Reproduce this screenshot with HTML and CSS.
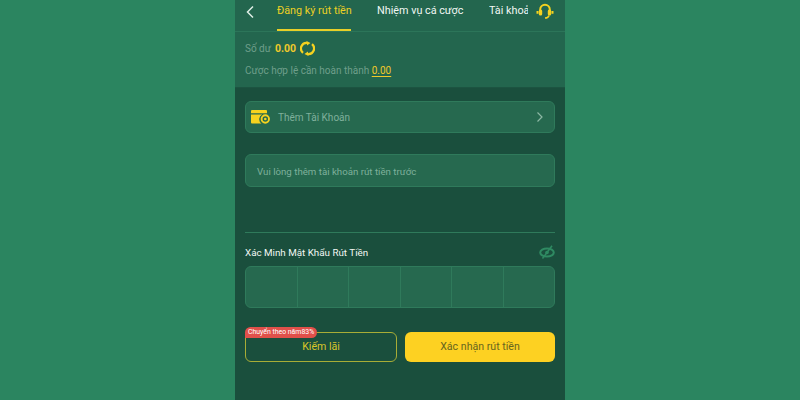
FILE: index.html
```html
<!DOCTYPE html>
<html lang="vi">
<head>
<meta charset="UTF-8">
<meta name="viewport" content="width=device-width, initial-scale=1.0">
<title>Đăng ký rút tiền</title>
<link rel="stylesheet" href="styles.css">
</head>
<body>
<div class="phone">
  <div class="top">
    <nav class="tabs">
      <svg class="back" width="10" height="14" viewBox="0 0 10 14"><path d="M8 1.500 2.500 7 8 12.500" fill="none" stroke="#dfeee6" stroke-width="1.500"/></svg>
      <div class="tab active">Đăng ký rút tiền</div>
      <div class="tab task">Nhiệm vụ cá cược</div>
      <div class="tab cut">Tài khoản</div>
      <svg class="support" width="18" height="17" viewBox="0 0 18 17">
        <path d="M4.200 9V6.500a4.800 4.800 0 0 1 9.600 0V9" fill="none" stroke="#f5d21f" stroke-width="2"/>
        <rect x="2.800" y="6.500" width="3.400" height="6" rx="1.500" fill="#f5d21f"/>
        <rect x="11.800" y="6.500" width="3.400" height="6" rx="1.500" fill="#f5d21f"/>
        <path d="M0.500 8h2v2.800h-2zM15.500 8h2v2.800h-2z" fill="#f5d21f"/>
        <path d="M13 12.500c-.5 1.800-2 2.500-4 2.500" fill="none" stroke="#f5d21f" stroke-width="1.600"/>
      </svg>
    </nav>
    <div class="balance">
      <div class="balance-row">
        <span>Số dư</span> <b>0.00</b>
        <svg width="15" height="15" viewBox="0 0 15 15">
          <path d="M3 11.800A5.600 5.600 0 0 1 7 1.900" fill="none" stroke="#f5d21f" stroke-width="2.300"/>
          <path d="M12 3.200A5.600 5.600 0 0 1 8 13.100" fill="none" stroke="#f5d21f" stroke-width="2.300"/>
          <path d="M6.500 0 10.500 2 7 4.500zM8.500 15 4.500 13 8 10.500z" fill="#f5d21f"/>
        </svg>
      </div>
      <div class="wager-row">Cược hợp lệ cần hoàn thành <u>0.00</u></div>
    </div>
  </div>

  <main class="content">
    <div class="box add-account">
      <svg width="19" height="14" viewBox="0 0 19 14">
        <path d="M1 0h14a1 1 0 0 1 1 1v2.200H0V1a1 1 0 0 1 1-1z" fill="#f5d21f"/>
        <path d="M0 4.500h11.200a5.200 5.200 0 0 0-.8 9H1a1 1 0 0 1-1-1z" fill="#f5d21f"/>
        <circle cx="14.300" cy="9" r="3.700" fill="none" stroke="#f5d21f" stroke-width="1.900"/>
        <circle cx="14.300" cy="9" r="1.300" fill="#f5d21f"/>
      </svg>
      <span class="add-text">Thêm Tài Khoản</span>
      <svg class="chev" width="8" height="12" viewBox="0 0 8 12"><path d="M1.500 1.500 6 6l-4.500 4.500" fill="none" stroke="#8db8a5" stroke-width="1.200"/></svg>
    </div>

    <div class="box notice">Vui lòng thêm tài khoản rút tiền trước</div>

    <hr class="line">

    <div class="pass-head">
      <span>Xác Minh Mật Khẩu Rút Tiền</span>
      <svg width="16" height="14" viewBox="0 0 16 14">
        <ellipse cx="8" cy="7.500" rx="6.800" ry="4" fill="none" stroke="#2f8a62" stroke-width="2"/>
        <circle cx="8" cy="7.500" r="1.800" fill="#2f8a62"/>
        <path d="M13 .8 3.500 13.500" stroke="#2f8a62" stroke-width="1.500"/>
      </svg>
    </div>
    <div class="pin">
      <div></div><div></div><div></div><div></div><div></div><div></div>
    </div>

    <div class="buttons">
      <div class="btn outline">
        <span class="badge">Chuyển theo năm83%</span>
        Kiếm lãi
      </div>
      <div class="btn solid">Xác nhận rút tiền</div>
    </div>
  </main>
</div>
</body>
</html>
```

FILE: styles.css
```css
body {
  margin: 0;
  height: 400px;
  overflow: hidden;
  background-color: #2b8560;
  font-family: Roboto, "Liberation Sans", sans-serif;
}

.phone {
  width: 330px;
  height: 400px;
  margin: 0 auto;
  background-color: #1a4f3d;
}

.top {
  height: 88px;
  background-color: #23664e;
  border-bottom: 1px solid #1c5441;
  box-sizing: border-box;
}

.tabs {
  display: flex;
  height: 32px;
  box-sizing: border-box;
  align-items: flex-start;
  padding-left: 10px;
  border-bottom: 1px solid #2c7559;
}

.back {
  margin-top: 5px;
}

.tab {
  color: #f1f7f3;
  font-size: 10.800px;
  line-height: 22px;
  height: 31px;
  box-sizing: border-box;
  white-space: nowrap;
}

.tab.active {
  margin-left: 22px;
  width: 74px;
  color: #ecd024;
  border-bottom: 2px solid #e8cf28;
}

.task {
  margin-left: 26px;
  width: 86px;
}

.cut {
  margin-left: 26px;
  width: 39px;
  overflow: hidden;
}

.support {
  margin-left: 8px;
  margin-top: 3px;
}

.balance {
  padding: 9px 10px 0;
  font-size: 10px;
  color: #6f9f8b;
}

.balance-row {
  display: flex;
  align-items: center;
  gap: 4px;
  height: 15px;
}

.balance-row b {
  color: #f0c92a;
  font-size: 10.500px;
}

.wager-row {
  margin-top: 8px;
  line-height: 14px;
}

.wager-row u {
  color: #f0c92a;
  text-underline-offset: 2px;
}

.content {
  padding: 13px 10px 0;
}

.box {
  display: flex;
  align-items: center;
  background-color: #26694f;
  border: 1px solid #2f7a5b;
  border-radius: 6px;
  box-sizing: border-box;
  font-size: 9.700px;
  color: #7fb09b;
}

.add-account {
  height: 32px;
  padding: 0 10px 0 5px;
  font-size: 10px;
}

.add-text {
  margin-left: 8px;
}

.chev {
  margin-left: auto;
}

.notice {
  height: 33px;
  margin-top: 21px;
  padding: 2px 0 0 11px;
}

.line {
  height: 1px;
  margin: 45px 0 0;
  border: 0;
  background-color: #2f7a5b;
}

.pass-head {
  display: flex;
  justify-content: space-between;
  align-items: center;
  margin-top: 11px;
  height: 16px;
  color: #f1f7f3;
  font-size: 9.800px;
}

.pin {
  display: flex;
  height: 42px;
  margin-top: 6px;
  background-color: #26694f;
  border: 1px solid #2f7a5b;
  border-radius: 6px;
  box-sizing: border-box;
}

.pin div {
  flex: 1;
  border-left: 1px solid #2f7a5b;
}

.pin div:first-child {
  border-left: 0;
}

.buttons {
  display: flex;
  gap: 8px;
  margin-top: 24px;
}

.btn {
  flex: 1;
  height: 30px;
  line-height: 30px;
  box-sizing: border-box;
  border-radius: 6px;
  text-align: center;
  font-size: 10.600px;
  position: relative;
}

.outline {
  line-height: 28px;
  border: 1px solid #a8ad36;
  color: #d9c62a;
}

.solid {
  background-color: #fdd122;
  color: #66651f;
}

.badge {
  position: absolute;
  left: -1px;
  top: -6px;
  height: 11px;
  line-height: 11px;
  padding: 0 3px;
  background-color: #e0504a;
  color: #fff;
  font-size: 6.900px;
  border-radius: 6px 6px 6px 0;
  white-space: nowrap;
}
```
